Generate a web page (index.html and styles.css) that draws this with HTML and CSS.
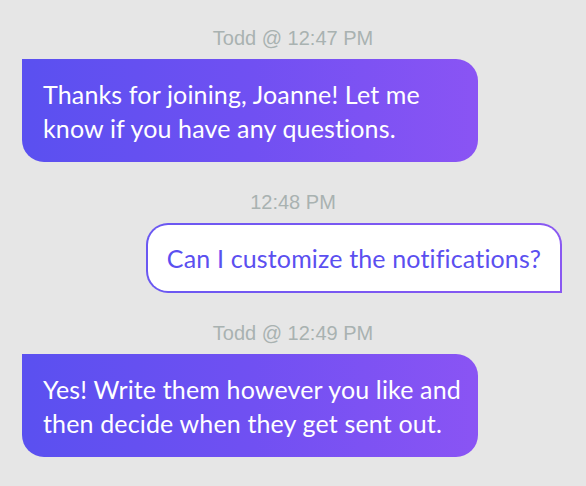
FILE: index.html
```html
<!DOCTYPE html>
<html>
<head>
<meta charset="utf-8">
<link rel="stylesheet" href="styles.css">
</head>
<body>
<div class="chat">
  <div class="group group-first">
    <div class="stamp">Todd @ 12:47 PM</div>
    <div class="bubble bubble-in">Thanks for joining, Joanne! Let me<br>know if you have any questions.</div>
  </div>
  <div class="group group-out">
    <div class="stamp">12:48 PM</div>
    <div class="bubble bubble-out">Can I customize the notifications?</div>
  </div>
  <div class="group">
    <div class="stamp">Todd @ 12:49 PM</div>
    <div class="bubble bubble-in">Yes! Write them however you like and<br>then decide when they get sent out.</div>
  </div>
</div>
</body>
</html>
```

FILE: styles.css
```css
html, body {
  margin: 0;
  padding: 0;
  background: #e6e6e6;
}
body {
  width: 586px;
  height: 486px;
  overflow: hidden;
}
.chat {
  display: flex;
  flex-direction: column;
  padding: 26px 24px 0 22px;
}
.group {
  display: flex;
  flex-direction: column;
  align-items: flex-start;
  margin-top: 28px;
}
.group-first {
  margin-top: 0;
}
.group-out {
  align-items: flex-end;
}
.stamp {
  align-self: stretch;
  text-align: center;
  margin: 0 -24px 9px -22px;
  font-family: "Liberation Sans", Arial, sans-serif;
  font-size: 20px;
  line-height: 24px;
  color: #a9b2b1;
}
.bubble {
  box-sizing: border-box;
  font-family: Lato, "Noto Sans", sans-serif;
  font-size: 25px;
  letter-spacing: 0.15px;
  line-height: 34px;
  white-space: nowrap;
  font-variant-ligatures: none;
}
.bubble-in {
  width: 456px;
  padding: 18px 21px 17px;
  color: #ffffff;
  background: linear-gradient(90deg, #5a50f0 0%, #7050f2 50%, #8a54f4 100%);
  border-radius: 0 22px 22px 22px;
}
.bubble-out {
  padding: 16px 19px;
  color: #5b4ff0;
  border: 2px solid transparent;
  background: linear-gradient(#ffffff, #ffffff) padding-box,
              linear-gradient(90deg, #6a58f2, #8a58f2) border-box;
  border-radius: 22px 22px 0 22px;
}
```
